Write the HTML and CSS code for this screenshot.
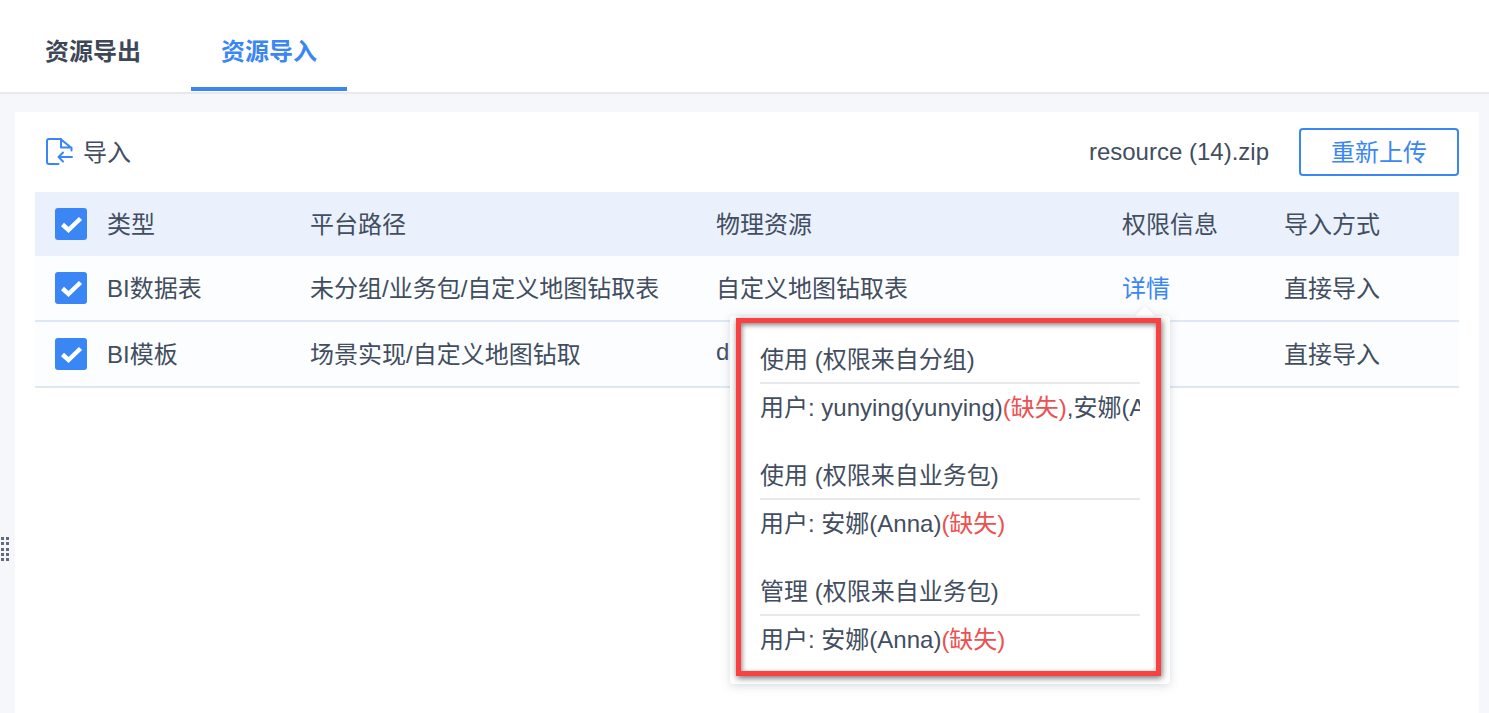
FILE: index.html
```html
<!DOCTYPE html>
<html lang="zh">
<head>
<meta charset="utf-8">
<title>资源导入</title>
<link rel="stylesheet" href="styles.css">
</head>
<body>
<header class="tabs">
  <div class="tab">资源导出</div>
  <div class="tab active">资源导入</div>
</header>
<main class="content">
  <section class="card">
    <div class="toolbar">
      <div class="import-label">
        <svg class="import-icon" width="28" height="28" viewBox="0 0 28 28" fill="none" stroke="#3b86f5" stroke-width="2" stroke-linejoin="round" stroke-linecap="round">
          <path d="M15.500 1H4a2 2 0 0 0-2 2v21a2 2 0 0 0 2 2h9.500"/>
          <path d="M16 1v8.500h10.500M15.500 1 26.500 10v2.500"/>
          <path d="M27 19H13.500M18 14.500 13.500 19l4.500 4.500"/>
        </svg>
        <span class="import-text">导入</span>
      </div>
      <div class="file-actions">
        <span>resource (14).zip</span>
        <button class="reupload" type="button"><span>重新上传</span></button>
      </div>
    </div>
    <div class="table">
      <div class="row head">
        <span class="check"><svg width="32" height="32" viewBox="0 0 32 32"><path d="M7.500 16.500 13.500 22 25.500 10.500" fill="none" stroke="#fff" stroke-width="4.500"/></svg></span>
        <span class="cell">类型</span><span class="cell">平台路径</span><span class="cell">物理资源</span><span class="cell">权限信息</span><span class="cell">导入方式</span>
      </div>
      <div class="row">
        <span class="check"><svg width="32" height="32" viewBox="0 0 32 32"><path d="M7.500 16.500 13.500 22 25.500 10.500" fill="none" stroke="#fff" stroke-width="4.500"/></svg></span>
        <span class="cell">BI数据表</span><span class="cell">未分组/业务包/自定义地图钻取表</span><span class="cell">自定义地图钻取表</span><span class="cell link">详情</span><span class="cell">直接导入</span>
      </div>
      <div class="row">
        <span class="check"><svg width="32" height="32" viewBox="0 0 32 32"><path d="M7.500 16.500 13.500 22 25.500 10.500" fill="none" stroke="#fff" stroke-width="4.500"/></svg></span>
        <span class="cell">BI模板</span><span class="cell">场景实现/自定义地图钻取</span><span class="cell">dashboard</span><span class="cell"></span><span class="cell">直接导入</span>
      </div>
    </div>
  </section>
</main>
<div class="grip" aria-hidden="true"><i></i><i></i><i></i><i></i><i></i><i></i><i></i><i></i><i></i><i></i></div>
<aside class="popover">
  <div class="perm">
    <div class="perm-title">使用 (权限来自分组)</div>
    <div class="perm-users">用户: yunying(yunying)<em>(缺失)</em>,安娜(Anna)<em>(缺失)</em></div>
  </div>
  <div class="perm">
    <div class="perm-title">使用 (权限来自业务包)</div>
    <div class="perm-users">用户: 安娜(Anna)<em>(缺失)</em></div>
  </div>
  <div class="perm">
    <div class="perm-title">管理 (权限来自业务包)</div>
    <div class="perm-users">用户: 安娜(Anna)<em>(缺失)</em></div>
  </div>
</aside>
<div class="annotation"></div>
</body>
</html>
```
FILE: styles.css
```css
* { box-sizing: border-box; }
html, body { height: 100%; }
body {
  margin: 0;
  height: 713px;
  overflow: hidden;
  position: relative;
  display: flex;
  flex-direction: column;
  background: #f5f7fa;
  color: #424e60;
  font-family: "Liberation Sans", "Noto Sans CJK SC", sans-serif;
  font-size: 24px;
}
.tabs {
  display: flex;
  flex: none;
  gap: 20px;
  height: 94px;
  padding-left: 15px;
  background: #fff;
  border-bottom: 2px solid #e8e9ed;
}
.tab {
  width: 156px;
  height: 91px;
  line-height: 104px;
  text-align: center;
  font-weight: 700;
  color: #3d4757;
}
.tab.active {
  color: #3b86f5;
  border-bottom: 4px solid #3b86f5;
}
.content {
  flex: 1;
  padding: 18px 10px 0 15px;
}
.card {
  height: 100%;
  padding: 16px 20px 0;
  background: #fff;
}
.toolbar {
  display: flex;
  align-items: center;
  justify-content: space-between;
  height: 48px;
  margin-bottom: 16px;
}
.import-label {
  display: flex;
  align-items: center;
  gap: 10px;
  padding-left: 10px;
}
.import-icon { display: block; }
.import-text { padding-bottom: 4px; }
.file-actions {
  display: flex;
  align-items: center;
  gap: 30px;
}
.reupload {
  width: 160px;
  height: 48px;
  padding: 0 0 4px;
  border: 2px solid #3b86f5;
  border-radius: 4px;
  background: #fff;
  color: #3b86f5;
  font: inherit;
}
.table { width: 1424px; }
.row {
  display: grid;
  grid-template-columns: 72px 203px 406px 406px 162px 175px;
  align-items: center;
  height: 66px;
  background: #fcfdff;
  border-bottom: 2px solid #dde8f6;
}
.row.head {
  height: 64px;
  background: #eaf1fd;
  border-bottom: 0;
}
.cell { padding-bottom: 4px; }
.check {
  display: block;
  width: 32px;
  height: 32px;
  margin-left: 20px;
  border-radius: 3px;
  background: #3b86f5;
}
.check svg { display: block; }
.link { color: #3b86f5; }
.grip {
  position: absolute;
  left: 1px;
  top: 537px;
  display: grid;
  grid-template-columns: 3px 3px;
  column-gap: 2px;
  row-gap: 2.330px;
}
.grip i {
  width: 3px;
  height: 3px;
  background: #5f6b80;
}
.popover {
  position: absolute;
  left: 730px;
  top: 316px;
  width: 440px;
  height: 368px;
  padding: 16px 30px 0;
  background: #fff;
  border-radius: 4px;
  box-shadow: 0 2px 10px rgba(120, 130, 150, 0.28);
}
.popover::before {
  content: "";
  position: absolute;
  right: 18px;
  top: -7px;
  width: 14px;
  height: 14px;
  background: #fff;
  transform: rotate(45deg);
  box-shadow: -2px -2px 4px rgba(120, 130, 150, 0.08);
}
.perm {
  height: 116px;
}
.perm-title {
  height: 52px;
  line-height: 56px;
  border-bottom: 2px solid #e8e9ed;
}
.perm-users {
  height: 50px;
  line-height: 48px;
  white-space: nowrap;
  overflow: hidden;
}
.perm-users em {
  font-style: normal;
  color: #ec5050;
}
.annotation {
  position: absolute;
  left: 736px;
  top: 318px;
  width: 425px;
  height: 358px;
  border: 5px solid #fa4141;
  box-shadow: 1px 2px 6px rgba(50, 50, 50, 0.7), inset 1px 2px 5px rgba(50, 50, 50, 0.6);
}
```
